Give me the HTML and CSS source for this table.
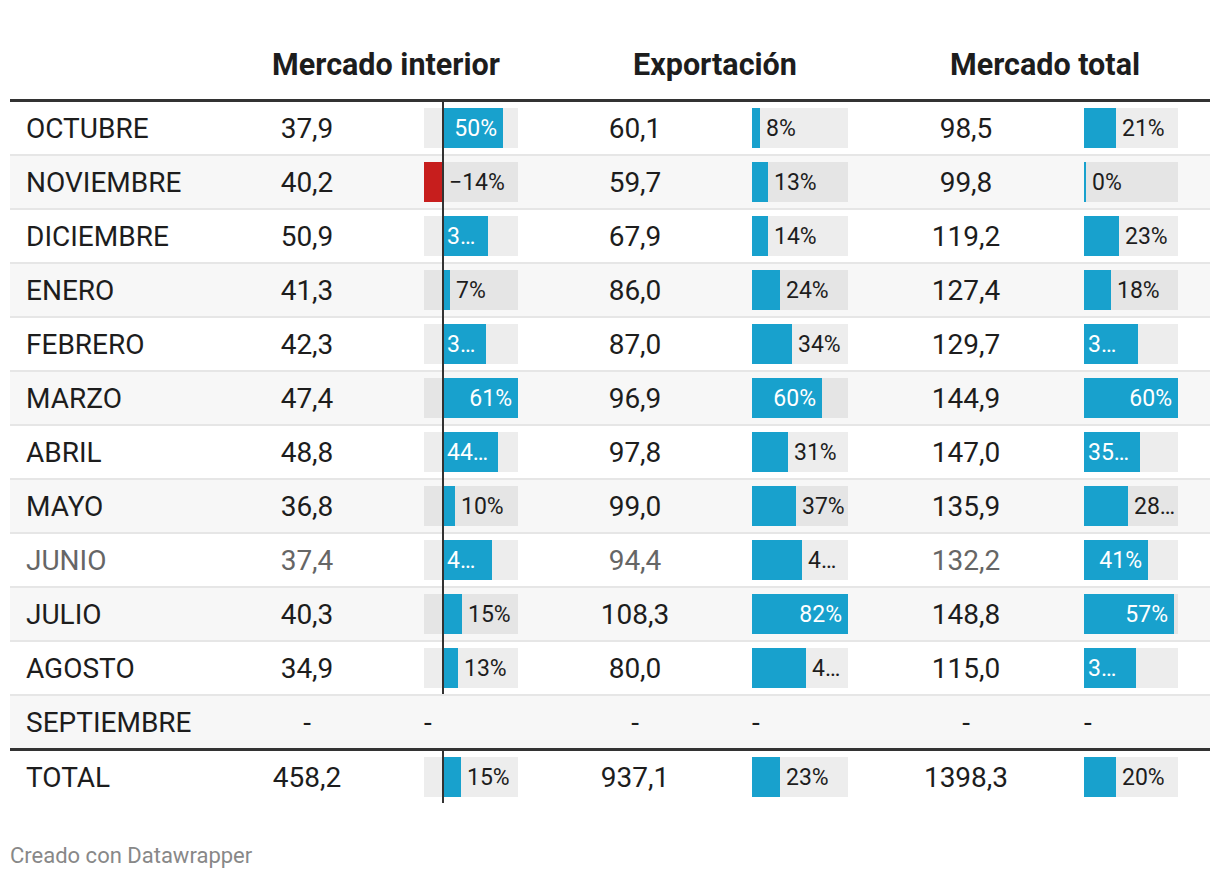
FILE: index.html
```html
<!DOCTYPE html>
<html lang="es">
<head>
<meta charset="utf-8">
<title>Mercado interior y exportación</title>
<link rel="stylesheet" href="styles.css">
</head>
<body>
<div class="chart">
  <div class="table">
    <div class="head">
      <div></div>
      <div class="grp">Mercado interior</div>
      <div class="grp">Exportación</div>
      <div class="grp">Mercado total</div>
    </div>
    <div class="rows">
      <div class="row">
        <div class="lbl">OCTUBRE</div>
        <div class="num">37,9</div>
        <div class="bc axis"><div class="track t1"><div class="neg"></div><div class="pos"><div class="bar in" style="width:60px"><span>50%</span></div></div></div></div>
        <div class="num">60,1</div>
        <div class="bc"><div class="track t2"><div class="pos"><div class="bar" style="width:8px"></div><span class="out">8%</span></div></div></div>
        <div class="num">98,5</div>
        <div class="bc"><div class="track t3"><div class="pos"><div class="bar" style="width:32px"></div><span class="out">21%</span></div></div></div>
      </div>
      <div class="row">
        <div class="lbl">NOVIEMBRE</div>
        <div class="num">40,2</div>
        <div class="bc axis"><div class="track t1"><div class="neg"><div class="nbar" style="width:18px"></div></div><div class="pos"><div class="bar" style="width:0px"></div><span class="out">−14%</span></div></div></div>
        <div class="num">59,7</div>
        <div class="bc"><div class="track t2"><div class="pos"><div class="bar" style="width:16px"></div><span class="out">13%</span></div></div></div>
        <div class="num">99,8</div>
        <div class="bc"><div class="track t3"><div class="pos"><div class="bar" style="width:2px"></div><span class="out">0%</span></div></div></div>
      </div>
      <div class="row">
        <div class="lbl">DICIEMBRE</div>
        <div class="num">50,9</div>
        <div class="bc axis"><div class="track t1"><div class="neg"></div><div class="pos"><div class="bar in trunc" style="width:45px"><span>3…</span></div></div></div></div>
        <div class="num">67,9</div>
        <div class="bc"><div class="track t2"><div class="pos"><div class="bar" style="width:16px"></div><span class="out">14%</span></div></div></div>
        <div class="num">119,2</div>
        <div class="bc"><div class="track t3"><div class="pos"><div class="bar" style="width:35px"></div><span class="out">23%</span></div></div></div>
      </div>
      <div class="row">
        <div class="lbl">ENERO</div>
        <div class="num">41,3</div>
        <div class="bc axis"><div class="track t1"><div class="neg"></div><div class="pos"><div class="bar" style="width:7px"></div><span class="out">7%</span></div></div></div>
        <div class="num">86,0</div>
        <div class="bc"><div class="track t2"><div class="pos"><div class="bar" style="width:28px"></div><span class="out">24%</span></div></div></div>
        <div class="num">127,4</div>
        <div class="bc"><div class="track t3"><div class="pos"><div class="bar" style="width:27px"></div><span class="out">18%</span></div></div></div>
      </div>
      <div class="row">
        <div class="lbl">FEBRERO</div>
        <div class="num">42,3</div>
        <div class="bc axis"><div class="track t1"><div class="neg"></div><div class="pos"><div class="bar in trunc" style="width:43px"><span>3…</span></div></div></div></div>
        <div class="num">87,0</div>
        <div class="bc"><div class="track t2"><div class="pos"><div class="bar" style="width:40px"></div><span class="out">34%</span></div></div></div>
        <div class="num">129,7</div>
        <div class="bc"><div class="track t3"><div class="pos"><div class="bar in trunc" style="width:54px"><span>3…</span></div></div></div></div>
      </div>
      <div class="row">
        <div class="lbl">MARZO</div>
        <div class="num">47,4</div>
        <div class="bc axis"><div class="track t1"><div class="neg"></div><div class="pos"><div class="bar in" style="width:75px"><span>61%</span></div></div></div></div>
        <div class="num">96,9</div>
        <div class="bc"><div class="track t2"><div class="pos"><div class="bar in" style="width:70px"><span>60%</span></div></div></div></div>
        <div class="num">144,9</div>
        <div class="bc"><div class="track t3"><div class="pos"><div class="bar in" style="width:94px"><span>60%</span></div></div></div></div>
      </div>
      <div class="row">
        <div class="lbl">ABRIL</div>
        <div class="num">48,8</div>
        <div class="bc axis"><div class="track t1"><div class="neg"></div><div class="pos"><div class="bar in trunc" style="width:55px"><span>44…</span></div></div></div></div>
        <div class="num">97,8</div>
        <div class="bc"><div class="track t2"><div class="pos"><div class="bar" style="width:36px"></div><span class="out">31%</span></div></div></div>
        <div class="num">147,0</div>
        <div class="bc"><div class="track t3"><div class="pos"><div class="bar in trunc" style="width:56px"><span>35…</span></div></div></div></div>
      </div>
      <div class="row">
        <div class="lbl">MAYO</div>
        <div class="num">36,8</div>
        <div class="bc axis"><div class="track t1"><div class="neg"></div><div class="pos"><div class="bar" style="width:12px"></div><span class="out">10%</span></div></div></div>
        <div class="num">99,0</div>
        <div class="bc"><div class="track t2"><div class="pos"><div class="bar" style="width:44px"></div><span class="out">37%</span></div></div></div>
        <div class="num">135,9</div>
        <div class="bc"><div class="track t3"><div class="pos"><div class="bar" style="width:44px"></div><span class="out">28…</span></div></div></div>
      </div>
      <div class="row muted">
        <div class="lbl">JUNIO</div>
        <div class="num">37,4</div>
        <div class="bc axis"><div class="track t1"><div class="neg"></div><div class="pos"><div class="bar in trunc" style="width:49px"><span>4…</span></div></div></div></div>
        <div class="num">94,4</div>
        <div class="bc"><div class="track t2"><div class="pos"><div class="bar" style="width:50px"></div><span class="out">4…</span></div></div></div>
        <div class="num">132,2</div>
        <div class="bc"><div class="track t3"><div class="pos"><div class="bar in" style="width:64px"><span>41%</span></div></div></div></div>
      </div>
      <div class="row">
        <div class="lbl">JULIO</div>
        <div class="num">40,3</div>
        <div class="bc axis"><div class="track t1"><div class="neg"></div><div class="pos"><div class="bar" style="width:19px"></div><span class="out">15%</span></div></div></div>
        <div class="num">108,3</div>
        <div class="bc"><div class="track t2"><div class="pos"><div class="bar in" style="width:96px"><span>82%</span></div></div></div></div>
        <div class="num">148,8</div>
        <div class="bc"><div class="track t3"><div class="pos"><div class="bar in" style="width:90px"><span>57%</span></div></div></div></div>
      </div>
      <div class="row">
        <div class="lbl">AGOSTO</div>
        <div class="num">34,9</div>
        <div class="bc axis"><div class="track t1"><div class="neg"></div><div class="pos"><div class="bar" style="width:15px"></div><span class="out">13%</span></div></div></div>
        <div class="num">80,0</div>
        <div class="bc"><div class="track t2"><div class="pos"><div class="bar" style="width:54px"></div><span class="out">4…</span></div></div></div>
        <div class="num">115,0</div>
        <div class="bc"><div class="track t3"><div class="pos"><div class="bar in trunc" style="width:52px"><span>3…</span></div></div></div></div>
      </div>
      <div class="row empty">
        <div class="lbl">SEPTIEMBRE</div>
        <div class="num">-</div>
        <div class="bc"><span class="dash">-</span></div>
        <div class="num">-</div>
        <div class="bc"><span class="dash">-</span></div>
        <div class="num">-</div>
        <div class="bc"><span class="dash">-</span></div>
      </div>
    </div>
    <div class="row total">
      <div class="lbl">TOTAL</div>
      <div class="num">458,2</div>
      <div class="bc axis"><div class="track t1"><div class="neg"></div><div class="pos"><div class="bar" style="width:18px"></div><span class="out">15%</span></div></div></div>
      <div class="num">937,1</div>
      <div class="bc"><div class="track t2"><div class="pos"><div class="bar" style="width:28px"></div><span class="out">23%</span></div></div></div>
      <div class="num">1398,3</div>
      <div class="bc"><div class="track t3"><div class="pos"><div class="bar" style="width:32px"></div><span class="out">20%</span></div></div></div>
    </div>
  </div>
  <div class="footer">Creado con Datawrapper</div>
</div>
</body>
</html>
```
FILE: styles.css
```css
html, body {
  margin: 0;
  padding: 0;
  background: #ffffff;
}

body {
  font-family: Roboto, "Liberation Sans", sans-serif;
  color: #1d1d1d;
}

.chart {
  padding: 0 10px;
}

.table {
  width: 1200px;
}

.head,
.row {
  display: grid;
  grid-template-columns: 212px 170px 158px 170px 160px 172px 158px;
}

.head {
  height: 99px;
  align-items: end;
}

.grp {
  grid-column: span 2;
  text-align: center;
  font-weight: 700;
  font-size: 30.5px;
  line-height: 36px;
  padding-bottom: 16px;
  color: #1d1d1d;
}

.rows {
  border-top: 3px solid #333333;
  border-bottom: 3px solid #333333;
}

.row {
  height: 52px;
  align-items: center;
  font-size: 28px;
  border-bottom: 2px solid #e6e6e6;
}

.rows .row:nth-child(even) {
  background: #f7f7f7;
}

.row.empty {
  border-bottom: none;
}

.row.total {
  height: 52px;
  border-bottom: none;
}

.row.muted {
  color: #666666;
}

.lbl {
  padding-left: 16px;
  white-space: nowrap;
}

.num {
  text-align: center;
  white-space: nowrap;
}

.bc {
  position: relative;
  height: 100%;
  display: flex;
  align-items: center;
  padding-left: 32px;
}

.axis::after {
  content: "";
  position: absolute;
  left: 50px;
  top: -2px;
  bottom: 0;
  width: 2px;
  background: #333333;
}

.track {
  height: 40px;
  display: flex;
  background: rgba(0, 0, 0, 0.07);
  overflow: hidden;
  font-size: 23px;
}

.t1 { width: 94px; }
.t2 { width: 96px; }
.t3 { width: 94px; }

.neg {
  width: 19px;
  flex: none;
  display: flex;
  justify-content: flex-end;
}

.t1 .neg .nbar {
  height: 40px;
  background: #c71e1d;
  margin-right: 1px;
}

.pos {
  flex: 1;
  display: flex;
  align-items: center;
  min-width: 0;
}

.bar {
  flex: none;
  height: 40px;
  background: #18a1cd;
  display: flex;
  align-items: center;
  justify-content: flex-end;
  box-sizing: border-box;
  color: #ffffff;
  white-space: nowrap;
  overflow: hidden;
}

.bar.in {
  padding-right: 6px;
}

.bar.trunc {
  justify-content: flex-start;
  padding-right: 0;
  padding-left: 4px;
}

.out {
  margin-left: 6px;
  color: #1d1d1d;
  white-space: nowrap;
}

.dash {
  font-size: 28px;
}

.footer {
  margin-top: 41px;
  font-size: 22px;
  line-height: 24px;
  color: #888888;
}
```
